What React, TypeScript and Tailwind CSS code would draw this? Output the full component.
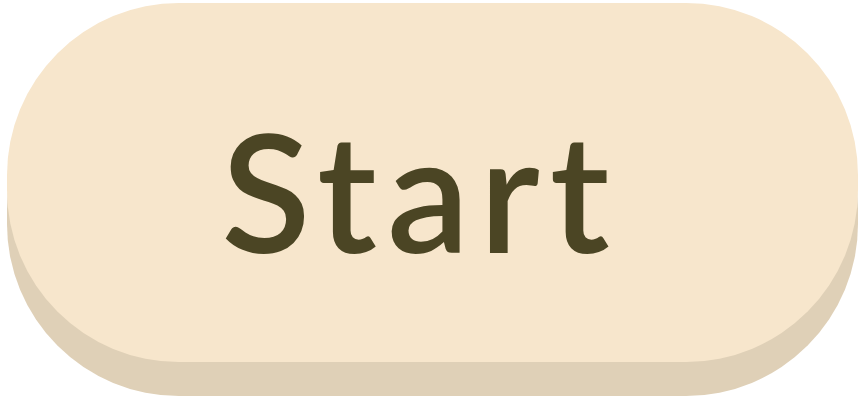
export default function App() {
  return (
    <div className="w-[865px] h-[403px] bg-white pt-[3px] pl-[7px]">
      <button
        className="w-[851px] h-[359px] rounded-[172px] bg-[#F7E6CC] shadow-[0_34px_0_#DFD0B7] flex items-center justify-center pt-[14px] pr-[24px]"
      >
        <span
          className="text-[164px] leading-none font-semibold tracking-[10px] text-[#4B4524]"
          style={{ fontFamily: "Lato, 'Noto Sans', sans-serif" }}
        >
          Start
        </span>
      </button>
    </div>
  );
}
